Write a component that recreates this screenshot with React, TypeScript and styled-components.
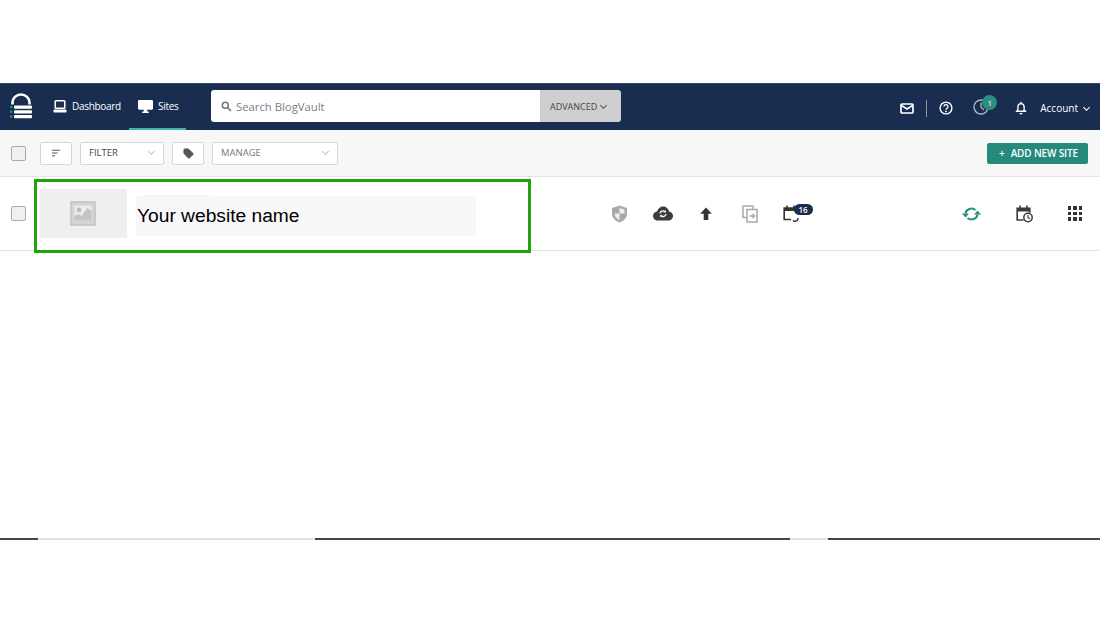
import styled, { createGlobalStyle } from "styled-components";
import { Tag } from "lucide-react";

const App = () => {
  return (
    <S.Page>
      <GlobalStyle />
      <S.Nav>
        <S.Logo>
          <svg width="24" height="28" viewBox="0 0 24 28" fill="none">
            <path d="M3.5 11.5V9.5a8.5 8 0 0 1 17 0v2" stroke="#fff" strokeWidth="2.6" />
            <rect x="5" y="12.5" width="18" height="3.2" rx="1" fill="#fff" />
            <rect x="5" y="17.2" width="18" height="3.2" rx="1" fill="#fff" />
            <rect x="5" y="22" width="18" height="3.2" rx="1" fill="#fff" />
            <circle cx="2.2" cy="14" r="1.3" fill="#2a8f81" />
            <circle cx="2.2" cy="18.8" r="1.3" fill="#2a8f81" />
            <circle cx="2.2" cy="23.6" r="1.3" fill="#2a8f81" />
          </svg>
        </S.Logo>
        <S.NavLink $width={77} $inset={1}>
          <svg width="14" height="13" viewBox="0 0 14 13" fill="none">
            <rect x="2.2" y="0.8" width="9.6" height="7.4" rx="0.8" stroke="#fff" strokeWidth="1.5" />
            <rect x="0.5" y="9.4" width="13" height="3.2" rx="0.8" fill="#fff" />
          </svg>
          Dashboard
        </S.NavLink>
        <S.NavLink $width={57} $inset={9} $active>
          <svg width="15" height="13" viewBox="0 0 15 13">
            <path d="M1.2 0h12.600c.66 0 1.200.54 1.200 1.200v7.400c0 .66-.54 1.200-1.200 1.200H9.200v1.600h1.600V13H4.200v-1.600h1.600V9.800H1.200C.54 9.800 0 9.260 0 8.600V1.200C0 .54.54 0 1.200 0z" fill="#fff" />
          </svg>
          Sites
        </S.NavLink>
        <S.Search>
          <S.SearchField>
            <svg width="11" height="11" viewBox="0 0 11 11" fill="none">
              <circle cx="4.3" cy="4.3" r="3" stroke="#6f7780" strokeWidth="1.5" />
              <path d="M6.6 6.6l3.4 3.4" stroke="#6f7780" strokeWidth="1.7" />
            </svg>
            Search BlogVault
          </S.SearchField>
          <S.Advanced>
            ADVANCED
            <S.Chevron $color="#555" />
          </S.Advanced>
        </S.Search>
        <S.NavRight>
          <svg width="14" height="11" viewBox="0 0 14 11" fill="none">
            <rect x="1" y="1" width="12" height="9" rx="1" stroke="#fff" strokeWidth="1.7" />
            <path d="M1.5 2.5L7 6l5.5-3.5" stroke="#fff" strokeWidth="1.5" />
          </svg>
          <S.Divider />
          <svg width="14" height="14" viewBox="0 0 14 14" fill="none">
            <circle cx="7" cy="7" r="5.9" stroke="#fff" strokeWidth="1.4" />
            <path d="M5 5.6a2 1.9 0 1 1 3 1.600c-.7.4-1 .8-1 1.500" stroke="#fff" strokeWidth="1.3" />
            <circle cx="7" cy="10.4" r=".9" fill="#fff" />
          </svg>
          <S.Clock>
            <svg width="16" height="16" viewBox="0 0 16 16" fill="none">
              <circle cx="8" cy="8" r="7" stroke="#aeb6c2" strokeWidth="1.4" />
              <path d="M8 3.500V8l3 3" stroke="#aeb6c2" strokeWidth="1.3" />
            </svg>
            <S.ClockBadge>1</S.ClockBadge>
          </S.Clock>
          <S.Bell>
            <svg width="12" height="14" viewBox="0 0 12 14">
              <path d="M6 .8c.5 0 .8.3.8.8v.5c1.900.4 3 1.900 3 3.900v2.800l1.500 1.500v.7H.7v-.7l1.500-1.500V6c0-2 1.100-3.500 3-3.900v-.5c0-.5.3-.8.8-.8zM6 3.300c-1.500 0-2.400 1.100-2.400 2.700v3.500h4.800V6c0-1.600-.9-2.700-2.400-2.700z" fill="#fff" />
              <path d="M4.500 11.900h3a1.500 1.500 0 0 1-3 0z" fill="#fff" />
            </svg>
          </S.Bell>
          <S.Account>
            Account
            <S.Chevron $color="#fff" />
          </S.Account>
        </S.NavRight>
      </S.Nav>

      <S.Toolbar>
        <S.Check />
        <S.ToolButton $width={32}>
          <svg width="10" height="8" viewBox="0 0 10 8" fill="none">
            <path d="M1 1.200h8M1 4h5.500M1 6.800h3" stroke="#555" strokeWidth="1.1" />
          </svg>
        </S.ToolButton>
        <S.Select $width={84} $dark>
          FILTER
          <S.Chevron $color="#c4c4c4" />
        </S.Select>
        <S.ToolButton $width={32}>
          <Tag size={11} fill="#555" stroke="#555" strokeWidth={2} />
        </S.ToolButton>
        <S.Select $width={126}>
          MANAGE
          <S.Chevron $color="#c4c4c4" />
        </S.Select>
        <S.AddButton>
          <span>+</span>
          ADD NEW SITE
        </S.AddButton>
      </S.Toolbar>

      <S.Row>
        <S.Check />
        <S.Thumb>
          <svg width="26" height="25" viewBox="0 0 26 25">
            <rect x="1" y="1" width="24" height="23" fill="#d4d4d4" stroke="#c2c2c2" strokeWidth="1.5" />
            <path d="M4.500 4.500h17v15h-17z" fill="#ececec" />
            <circle cx="9" cy="9" r="2.400" fill="#bdbdbd" />
            <path d="M4.500 19.500V15l4-2 3 2 6-8 4 3v9.500z" fill="#c4c4c4" />
          </svg>
        </S.Thumb>
        <S.SiteName>Your website name</S.SiteName>
        <S.Actions>
          <svg width="17" height="18" viewBox="0 0 17 18">
            <path d="M8.500.5L16 3v5.500c0 4.200-3 7.500-7.500 9C4 16 1 12.700 1 8.500V3z" fill="#a9a9a9" />
            <path d="M8.500 3l5 1.700v3.800h-5zM8.500 8.500V15c-2.800-1.200-4.800-3.500-5-6.500z" fill="#f0f0f0" />
          </svg>
          <svg width="20" height="15" viewBox="0 0 20 15">
            <path d="M4.800 14.500C2.100 14.500 0 12.500 0 10c0-2.300 1.700-4.100 4-4.400C4.900 2.500 7.300.5 10 .5c3 0 5.500 2.100 6 5 2.300.3 4 2.200 4 4.500 0 2.500-2.100 4.500-4.800 4.500z" fill="#3d3d3d" />
            <path d="M7 7.500a3 3 0 0 1 5-1.800M13 8a3 3 0 0 1-5 1.800" stroke="#fff" strokeWidth="1.3" fill="none" />
            <path d="M12.800 4v2.600h-2.600zM7.200 11.500V8.900h2.600z" fill="#fff" />
          </svg>
          <svg width="12" height="13" viewBox="0 0 12 13">
            <path d="M6 .5l5.800 6.300H8.300V13H3.700V6.800H.2z" fill="#333" />
          </svg>
          <S.CopyIcon width="16" height="18" viewBox="0 0 16 18" fill="none">
            <path d="M11 4.500V1H1v11.500h4" stroke="#aaa" strokeWidth="1.5" />
            <path d="M5 4.500h10V17H5z" stroke="#aaa" strokeWidth="1.5" />
            <path d="M7.500 11h5M10.500 8.800l2.200 2.200-2.200 2.200" stroke="#aaa" strokeWidth="1.3" />
          </S.CopyIcon>
          <S.Schedule>
            <svg width="18" height="17" viewBox="0 0 18 17" fill="none">
              <path d="M8 14.500H1.200V3h12.600v5" stroke="#333" strokeWidth="1.6" />
              <path d="M1 3h13v3H1z" fill="#333" />
              <path d="M4 .5v3M11 .5v3" stroke="#333" strokeWidth="1.6" />
              <path d="M10 15.500a3 3 0 0 0 5-2.500" stroke="#333" strokeWidth="1.4" />
            </svg>
            <S.ScheduleBadge>16</S.ScheduleBadge>
          </S.Schedule>
        </S.Actions>
        <S.RowEnd>
          <svg width="19" height="14" viewBox="0 0 19 14" fill="none">
            <path d="M3.500 6.500A6 5.500 0 0 1 13.500 3" stroke="#2a8f81" strokeWidth="2.2" />
            <path d="M15.500 7.500A6 5.500 0 0 1 5.500 11" stroke="#2a8f81" strokeWidth="2.2" />
            <path d="M0 6.500h7L3.500 10.500zM19 7.500h-7L15.500 3.500z" fill="#2a8f81" />
          </svg>
          <svg width="17" height="18" viewBox="0 0 17 18" fill="none">
            <path d="M7.500 15H1.200V3.200h12.600v4.500" stroke="#3a3a3a" strokeWidth="1.6" />
            <path d="M1 3h13v3.500H1z" fill="#3a3a3a" />
            <path d="M4 .5v3M11 .5v3" stroke="#3a3a3a" strokeWidth="1.6" />
            <circle cx="12" cy="12.500" r="4.200" stroke="#3a3a3a" strokeWidth="1.5" fill="#fff" />
            <path d="M12 10v2.700l1.800 1" stroke="#3a3a3a" strokeWidth="1.2" />
          </svg>
          <S.Grid>
            {Array.from({ length: 9 }).map((_, i) => (
              <i key={i} />
            ))}
          </S.Grid>
        </S.RowEnd>
        <S.Highlight />
      </S.Row>

      <S.Rule>
        <S.RuleSegment $width={38} />
        <S.RuleSegment $width={277} $light />
        <S.RuleSegment $width={475} />
        <S.RuleSegment $width={38} $light />
        <S.RuleSegment $width={272} />
      </S.Rule>
    </S.Page>
  );
};

export default App;

const GlobalStyle = createGlobalStyle`
  body {
    margin: 0;
    background: #fff;
    font-family: "Open Sans", sans-serif;
  }
`;

interface widthProps {
  $width: number;
}

const S = {
  Page: styled.div`
    width: 1100px;
    height: 619px;
    padding-top: 83px;
    box-sizing: border-box;
    overflow: hidden;
  `,
  Nav: styled.div`
    display: flex;
    align-items: stretch;
    height: 47px;
    background: #182d50;
    border-top: 1px solid #3b4a63;
    box-sizing: border-box;
    color: #fff;
  `,
  Logo: styled.div`
    display: flex;
    align-items: center;
    width: 52px;
    padding-left: 9px;
    box-sizing: border-box;
  `,
  NavLink: styled.div<widthProps & { $inset: number; $active?: boolean }>`
    display: flex;
    align-items: center;
    gap: 5px;
    width: ${({ $width }) => $width}px;
    padding-left: ${({ $inset }) => $inset}px;
    box-sizing: border-box;
    font-size: 10px;
    letter-spacing: -0.3px;
    border-bottom: 2px solid ${({ $active }) => ($active ? "#3fb6ac" : "transparent")};
  `,
  Search: styled.div`
    display: flex;
    height: 32px;
    width: 410px;
    margin: 6px 0 0 25px;
    border-radius: 3px;
    overflow: hidden;
  `,
  SearchField: styled.div`
    display: flex;
    align-items: center;
    gap: 4px;
    flex: 1;
    padding-left: 10px;
    background: #fff;
    color: #78808a;
    font-size: 11.3px;
  `,
  Advanced: styled.div`
    display: flex;
    align-items: center;
    gap: 4px;
    width: 81px;
    padding-left: 10px;
    box-sizing: border-box;
    background: #cfcfcf;
    color: #444;
    font-size: 9px;
  `,
  Chevron: styled.span<{ $color: string }>`
    display: inline-block;
    width: 4px;
    height: 4px;
    margin-top: -2px;
    border-right: 1px solid ${({ $color }) => $color};
    border-bottom: 1px solid ${({ $color }) => $color};
    transform: rotate(45deg);
  `,
  NavRight: styled.div`
    display: flex;
    align-items: center;
    margin-left: auto;
    padding: 2px 11px 0 0;
  `,
  Divider: styled.div`
    width: 1px;
    height: 17px;
    margin: 0 12px;
    background: #8b96a8;
  `,
  Clock: styled.div`
    position: relative;
    display: flex;
    margin: -3px 0 0 20px;
  `,
  ClockBadge: styled.span`
    position: absolute;
    top: -4px;
    left: 9px;
    width: 15px;
    height: 15px;
    border-radius: 50%;
    background: #2a8f81;
    font-size: 8px;
    line-height: 15px;
    text-align: center;
  `,
  Bell: styled.div`
    display: flex;
    margin-left: 26px;
  `,
  Account: styled.div`
    display: flex;
    align-items: center;
    gap: 6px;
    margin-left: 13px;
    font-size: 10px;
  `,
  Toolbar: styled.div`
    display: flex;
    align-items: center;
    height: 47px;
    padding: 0 12px 0 11px;
    background: #f7f7f7;
    border-bottom: 1px solid #e4e4e4;
    box-sizing: border-box;
  `,
  Check: styled.span`
    flex: none;
    width: 13px;
    height: 13px;
    background: #f0f0f0;
    border: 1px solid #aaa;
    border-radius: 2px;
  `,
  ToolButton: styled.div<widthProps>`
    display: flex;
    align-items: center;
    justify-content: center;
    width: ${({ $width }) => $width}px;
    height: 23px;
    margin-left: 8px;
    background: #fff;
    border: 1px solid #d8d8d8;
    border-radius: 2px;
    box-sizing: border-box;
    &:first-of-type {
      margin-left: 14px;
    }
  `,
  Select: styled.div<widthProps & { $dark?: boolean }>`
    display: flex;
    align-items: center;
    justify-content: space-between;
    width: ${({ $width }) => $width}px;
    height: 23px;
    margin-left: 8px;
    padding: 0 9px 1px 8px;
    background: #fff;
    border: 1px solid #d8d8d8;
    border-radius: 2px;
    box-sizing: border-box;
    color: ${({ $dark }) => ($dark ? "#444" : "#777")};
    font-size: 9.5px;
  `,
  AddButton: styled.div`
    display: flex;
    align-items: center;
    justify-content: center;
    gap: 6px;
    width: 101px;
    height: 21px;
    margin-left: auto;
    padding-left: 2px;
    box-sizing: border-box;
    background: #258a7c;
    border-radius: 2px;
    color: #fff;
    font-size: 10px;
    font-weight: 600;
    letter-spacing: -0.15px;
  `,
  Row: styled.div`
    position: relative;
    display: flex;
    align-items: center;
    height: 74px;
    padding: 0 18px 0 11px;
    border-bottom: 1px solid #e4e4e4;
    box-sizing: border-box;
  `,
  Thumb: styled.div`
    display: flex;
    align-items: center;
    justify-content: center;
    flex: none;
    width: 87px;
    height: 49px;
    margin-left: 14px;
    padding-right: 2px;
    box-sizing: border-box;
    background: #efefef;
  `,
  SiteName: styled.div`
    position: relative;
    flex: none;
    display: flex;
    align-items: center;
    width: 340px;
    height: 40px;
    margin: 4px 0 0 9px;
    padding-left: 1px;
    box-sizing: border-box;
    background: #f8f8fa;
    color: #000;
    font-family: "Liberation Sans", sans-serif;
    font-size: 19.2px;
    &::before {
      content: "";
      position: absolute;
      top: -1px;
      left: 8px;
      width: 66px;
      height: 1px;
      background: #f3f3f3;
    }
  `,
  Actions: styled.div`
    display: grid;
    grid-template-columns: repeat(5, 43px);
    justify-items: center;
    align-items: center;
    margin-left: 122px;
  `,
  CopyIcon: styled.svg`
    margin-left: 2px;
  `,
  Schedule: styled.div`
    position: relative;
    display: flex;
  `,
  ScheduleBadge: styled.span`
    position: absolute;
    top: -1px;
    left: 11px;
    width: 19px;
    height: 11px;
    border-radius: 6px;
    background: #182d50;
    color: #fff;
    font-size: 8px;
    font-weight: 600;
    line-height: 11px;
    text-align: center;
  `,
  RowEnd: styled.div`
    display: flex;
    align-items: center;
    justify-content: space-between;
    width: 120px;
    margin-left: auto;
  `,
  Grid: styled.div`
    display: grid;
    grid-template-columns: repeat(3, 3.5px);
    gap: 2px;
    i {
      height: 3.5px;
      background: #333;
    }
  `,
  Highlight: styled.div`
    position: absolute;
    top: 2px;
    left: 34px;
    width: 497px;
    height: 74px;
    border: 3px solid #22a20e;
    box-sizing: border-box;
  `,
  Rule: styled.div`
    display: flex;
    margin-top: 287px;
  `,
  RuleSegment: styled.div<widthProps & { $light?: boolean }>`
    width: ${({ $width }) => $width}px;
    height: 2px;
    background: ${({ $light }) => ($light ? "#e2e2e2" : "#3a4a4a")};
  `,
};
